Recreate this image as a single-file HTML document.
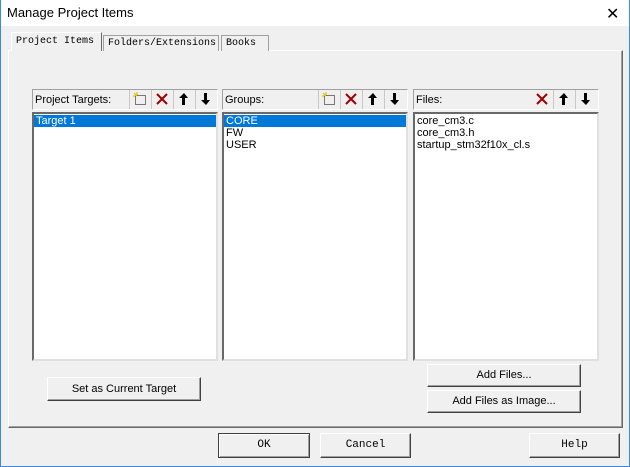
<!DOCTYPE html>
<html><head><style>
*{margin:0;padding:0;box-sizing:border-box}
body{width:630px;height:467px;background:#f0f0f0;position:relative;overflow:hidden;font-family:"Liberation Sans",sans-serif;font-size:11px;color:#000}
.a{position:absolute;white-space:nowrap}
.title{left:0;top:0;width:630px;height:26px;background:#fff;font-size:13px;padding:5px 0 0 7px}
.win{left:0;top:0;width:630px;height:467px;border:1px solid #3c8ad8;border-top:none}
.tab{font-family:"Liberation Mono",monospace;font-size:10px;border:1px solid #a0a0a0;border-bottom:none;background:#f0f0f0;padding:3px 0 0 4px;overflow:hidden}
.panel{border:1px solid #fff;border-right-color:#696969;border-bottom-color:#696969;box-shadow:inset -1px -1px #a0a0a0}
.hdr{border:1px solid #a0a0a0;border-right-color:#fff;border-bottom-color:#fff;background:#f0f0f0;height:21px;padding:4px 0 0 2px}
.list{background:#fff;border:2px solid #808080;border-right-color:#e0e0e0;border-bottom-color:#e0e0e0;border-top-color:#696969;border-left-color:#696969;padding:1px 0;line-height:12px}
.sel{background:#0078d7;color:#fff;padding-left:2px}
.it{padding-left:2px}
.ic{width:21px;height:19px;top:0;border-left:1px solid #c8c8c8;text-align:center;line-height:18px}
.ic svg{display:block;margin:2px auto}
.btn{background:#f0f0f0;border:1px solid #fff;border-right-color:#404040;border-bottom-color:#404040;box-shadow:inset -1px -1px #a0a0a0;text-align:center;font-size:11px}
.mono{font-family:"Liberation Mono",monospace}
</style></head><body>
<div class="a title">Manage Project Items</div>
<div class="a" style="left:606px;top:4px;font-size:16px">✕</div>
<div class="a win"></div>
<div class="a panel" style="left:8px;top:50px;width:615px;height:378px"></div>
<div class="a tab" style="left:11px;top:32px;width:91px;height:19px;border-color:#fff #696969 #fff #fff;padding-top:3px">Project Items</div>
<div class="a tab" style="left:103px;top:35px;width:116px;height:16px;padding-top:2px">Folders/Extensions</div>
<div class="a tab" style="left:221px;top:35px;width:48px;height:16px;padding-top:2px">Books</div>

<svg width="0" height="0" style="position:absolute"><defs>
<symbol id="new" viewBox="0 0 14 14"><rect x="2.5" y="3.5" width="10" height="9" fill="none" stroke="#000" stroke-dasharray="1 1"/><path d="M1 1l3 3M4 0v3M0 4h3" stroke="#e0c000" stroke-width="1.2"/></symbol>
<symbol id="del" viewBox="0 0 14 14"><path d="M2 2l10 10M12 2L2 12" stroke="#a00000" stroke-width="2"/></symbol>
<symbol id="up" viewBox="0 0 14 14"><path d="M7 1L2 6h3v7h3V6h3z" fill="#000"/></symbol>
<symbol id="dn" viewBox="0 0 14 14"><path d="M7 13L2 8h3V1h3v7h3z" fill="#000"/></symbol>
</defs></svg>

<div class="a hdr" style="left:32px;top:89px;width:186px">Project Targets:</div>
<div class="a" style="left:129px;top:90px;width:88px;height:20px">
 <div class="a ic" style="left:0"><svg width="14" height="14"><use href="#new"/></svg></div>
 <div class="a ic" style="left:22px"><svg width="14" height="14"><use href="#del"/></svg></div>
 <div class="a ic" style="left:44px"><svg width="14" height="14"><use href="#up"/></svg></div>
 <div class="a ic" style="left:66px"><svg width="14" height="14"><use href="#dn"/></svg></div>
</div>
<div class="a list" style="left:32px;top:112px;width:186px;height:249px"><div class="sel">Target 1</div></div>

<div class="a hdr" style="left:222px;top:89px;width:186px">Groups:</div>
<div class="a" style="left:318px;top:90px;width:88px;height:20px">
 <div class="a ic" style="left:0"><svg width="14" height="14"><use href="#new"/></svg></div>
 <div class="a ic" style="left:22px"><svg width="14" height="14"><use href="#del"/></svg></div>
 <div class="a ic" style="left:44px"><svg width="14" height="14"><use href="#up"/></svg></div>
 <div class="a ic" style="left:66px"><svg width="14" height="14"><use href="#dn"/></svg></div>
</div>
<div class="a list" style="left:222px;top:112px;width:186px;height:249px"><div class="sel">CORE</div><div class="it">FW</div><div class="it">USER</div></div>

<div class="a hdr" style="left:413px;top:89px;width:186px">Files:</div>
<div class="a" style="left:531px;top:90px;width:66px;height:20px">
 <div class="a ic" style="left:0;border-left:none"><svg width="14" height="14"><use href="#del"/></svg></div>
 <div class="a ic" style="left:22px"><svg width="14" height="14"><use href="#up"/></svg></div>
 <div class="a ic" style="left:44px"><svg width="14" height="14"><use href="#dn"/></svg></div>
</div>
<div class="a list" style="left:413px;top:112px;width:186px;height:249px"><div class="it">core_cm3.c</div><div class="it">core_cm3.h</div><div class="it">startup_stm32f10x_cl.s</div></div>

<div class="a btn" style="left:47px;top:377px;width:154px;height:24px;line-height:22px">Set as Current Target</div>
<div class="a btn" style="left:427px;top:364px;width:154px;height:23px;line-height:21px">Add Files...</div>
<div class="a btn" style="left:427px;top:390px;width:154px;height:23px;line-height:21px">Add Files as Image...</div>

<div class="a btn mono" style="left:218px;top:433px;width:92px;height:25px;line-height:23px;border-color:#404040;box-shadow:inset 1px 1px #fff,inset -1px -1px #a0a0a0">OK</div>
<div class="a btn mono" style="left:320px;top:433px;width:91px;height:25px;line-height:23px">Cancel</div>
<div class="a btn mono" style="left:529px;top:433px;width:91px;height:25px;line-height:23px">Help</div>
</body></html>
